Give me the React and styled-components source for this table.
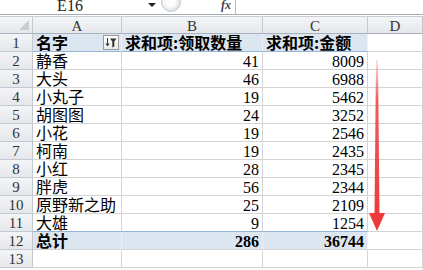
import React from 'react';
import styled, { createGlobalStyle } from 'styled-components';

const GlobalStyle = createGlobalStyle`
  body {
    margin: 0;
    background: #fff;
  }
`;

const CJK = `"Noto Sans CJK SC", "Noto Sans", sans-serif`;
const SERIF = `"Liberation Serif", "DejaVu Serif", serif`;

const GRID = '#d4d4d4';
const PIVOT_BG = '#dce6f1';
const PIVOT_LINE = '#95b3d7';
const HEAD_LINE = '#c3c8cf';

const Window = styled.div`
  position: relative;
  width: 423px;
  height: 270px;
  overflow: hidden;
  display: flex;
  flex-direction: column;
  font-family: ${CJK};
  color: #000;

  & > * {
    flex-shrink: 0;
  }
`;

const FormulaBar = styled.div`
  height: 14px;
  display: flex;
  align-items: flex-start;
  overflow: hidden;
  border-bottom: 1px solid #a3aab4;
  background: #fff;
`;

const NameBox = styled.div`
  width: 140px;
  text-align: center;
  font-family: ${SERIF};
  font-size: 16px;
  line-height: 11px;
  color: #222;
`;

const DropArrow = styled.div`
  width: 0;
  height: 0;
  margin: 3px 0 0 8px;
  border-left: 4px solid transparent;
  border-right: 4px solid transparent;
  border-top: 4px solid #222;
`;

const Grip = styled.div`
  width: 20px;
  height: 20px;
  margin: -8px 0 0 5px;
  border-radius: 50%;
  border: 1px solid #c2c7ce;
  background: radial-gradient(circle at 45% 45%, #fdfdfd 0 35%, #dfe2e6 70%);
  box-sizing: border-box;
`;

const FxLabel = styled.div`
  margin: -1px 0 0 40px;
  width: 14px;
  font-family: ${SERIF};
  font-style: italic;
  font-weight: bold;
  font-size: 12px;
  line-height: 12px;
  color: #444;
`;

const FormulaInput = styled.div`
  flex: 1;
  height: 14px;
  border-left: 1px solid #b5bbc4;
`;

const Divider = styled.div`
  height: 1px;
  border-bottom: 1px solid #c9ced5;
  background: #fff;
`;

const Sheet = styled.div`
  display: grid;
  grid-template-columns: 33px 89px 141px 105px 55px;
  grid-template-rows: 17px;
  grid-auto-rows: 18px;
`;

const HeadCell = styled.div`
  box-sizing: border-box;
  display: flex;
  align-items: center;
  justify-content: center;
  background: linear-gradient(#f4f5f7, #e4e7eb);
  border-right: 1px solid ${HEAD_LINE};
  border-bottom: 1px solid ${(p) => (p.$corner ? '#a9b0ba' : HEAD_LINE)};
  font-family: ${SERIF};
  font-size: 15px;
  line-height: 16px;
  color: #333;
  position: relative;
`;

const ColHead = styled(HeadCell)`
  border-bottom-color: #a9b0ba;
  padding-top: 1px;
`;

const CornerMark = styled.div`
  position: absolute;
  right: 3px;
  bottom: 3px;
  width: 0;
  height: 0;
  border-left: 10px solid transparent;
  border-bottom: 10px solid #c8ccd2;
`;

const Cell = styled.div`
  box-sizing: border-box;
  display: flex;
  align-items: center;
  justify-content: ${(p) => (p.$num ? 'flex-end' : 'flex-start')};
  padding: ${(p) => (p.$num ? '1px 3px 0 0' : '0 0 0 3px')};
  background: ${(p) => (p.$pivot ? PIVOT_BG : '#fff')};
  border-right: 1px solid ${(p) => (p.$pivot ? '#edf1f7' : GRID)};
  border-bottom: 1px solid ${(p) => (p.$blue ? PIVOT_LINE : GRID)};
  font-family: ${(p) => (p.$num ? SERIF : CJK)};
  font-size: 16px;
  font-weight: ${(p) => (p.$bold ? 700 : 400)};
  line-height: 17px;
  white-space: nowrap;
  overflow: hidden;
`;

const FilterButton = styled.div`
  box-sizing: border-box;
  width: 16px;
  height: 15px;
  margin-left: auto;
  margin-right: 2px;
  border: 1px solid #9a9a9a;
  background: linear-gradient(#ffffff, #e9e9e9);
  display: flex;
  align-items: center;
  justify-content: center;
`;

const Overlay = styled.svg`
  position: absolute;
  left: 0;
  top: 0;
  pointer-events: none;
`;

const rows = [
  ['静香', 41, 8009],
  ['大头', 46, 6988],
  ['小丸子', 19, 5462],
  ['胡图图', 24, 3252],
  ['小花', 19, 2546],
  ['柯南', 19, 2435],
  ['小红', 28, 2345],
  ['胖虎', 56, 2344],
  ['原野新之助', 25, 2109],
  ['大雄', 9, 1254],
];

const FilterIcon = () => (
  <svg width="12" height="11" viewBox="0 0 12 11">
    <path d="M2.5 1 V8.5" stroke="#333" strokeWidth="1" />
    <path d="M0.5 6.5 L2.5 9.5 L4.5 6.5 Z" fill="#333" />
    <path d="M5 1.5 H11.5 L9.3 4.5 V9.5 L7.3 10.5 V4.5 Z" fill="#333" />
  </svg>
);

const App = () => (
  <>
    <GlobalStyle />
    <Window>
      <FormulaBar>
        <NameBox>E16</NameBox>
        <DropArrow />
        <Grip />
        <FxLabel>fx</FxLabel>
        <FormulaInput />
      </FormulaBar>
      <Divider />
      <Sheet>
        <HeadCell $corner>
          <CornerMark />
        </HeadCell>
        <ColHead>A</ColHead>
        <ColHead>B</ColHead>
        <ColHead>C</ColHead>
        <ColHead>D</ColHead>

        <HeadCell>1</HeadCell>
        <Cell $pivot $blue $bold>
          名字
          <FilterButton>
            <FilterIcon />
          </FilterButton>
        </Cell>
        <Cell $pivot $blue $bold>求和项:领取数量</Cell>
        <Cell $pivot $blue $bold>求和项:金额</Cell>
        <Cell />

        {rows.map(([name, qty, amount], i) => (
          <React.Fragment key={name}>
            <HeadCell>{i + 2}</HeadCell>
            <Cell $blue={i === rows.length - 1}>{name}</Cell>
            <Cell $num $blue={i === rows.length - 1}>{qty}</Cell>
            <Cell $num $blue={i === rows.length - 1}>{amount}</Cell>
            <Cell />
          </React.Fragment>
        ))}

        <HeadCell>12</HeadCell>
        <Cell $pivot $bold>总计</Cell>
        <Cell $pivot $num $bold>286</Cell>
        <Cell $pivot $num $bold>36744</Cell>
        <Cell />

        <HeadCell>13</HeadCell>
        <Cell />
        <Cell />
        <Cell />
        <Cell />
      </Sheet>

      <Overlay width="423" height="270" viewBox="0 0 423 270">
        <defs>
          <linearGradient id="shaft" x1="0" y1="0" x2="0" y2="1">
            <stop offset="0" stopColor="#f04040" stopOpacity="0.15" />
            <stop offset="0.25" stopColor="#f04040" stopOpacity="0.85" />
            <stop offset="1" stopColor="#ee3a3a" />
          </linearGradient>
        </defs>
        <path d="M376 60 L378 60 L379.5 214 L374.5 214 Z" fill="url(#shaft)" />
        <path d="M369 213 L385 213 L377 231 Z" fill="#ee3a3a" />
      </Overlay>
    </Window>
  </>
);

export default App;
